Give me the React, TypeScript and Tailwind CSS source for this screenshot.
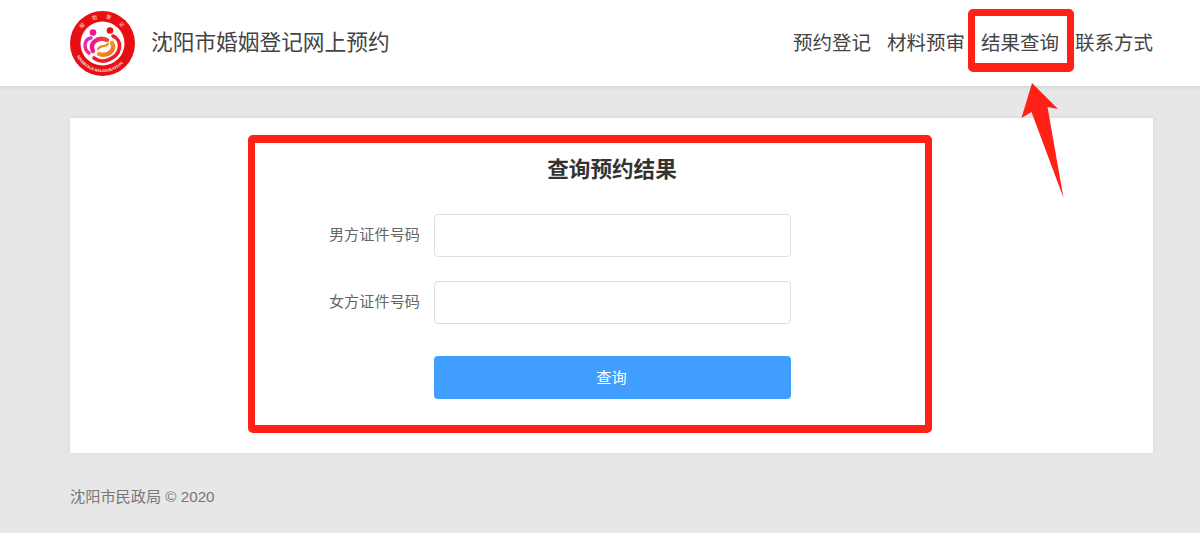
export default function App() {
  const font = "font-['Liberation_Sans','Noto_Sans_CJK_SC',sans-serif]";
  return (
    <div className={`${font} relative min-h-[533px] bg-[#e7e7e7] text-[#333]`}>
      <header className="flex h-[86px] items-center justify-between bg-white pl-[70px] pr-[47px] shadow-[0_1px_4px_rgba(0,0,0,0.1)]">
        <div className="flex items-center gap-[16px]">
          <svg width="65" height="65" viewBox="0 0 65 65" className="shrink-0">
            <defs>
              <path id="ringTop" d="M7.5 32.5 A25 25 0 0 1 57.5 32.5" />
              <path id="ringBottom" d="M4 32.5 A28.5 28.5 0 0 0 61 32.5" />
              <linearGradient id="leftArc" x1="0" y1="0" x2="0" y2="1">
                <stop offset="0" stopColor="#d92ad0" />
                <stop offset="1" stopColor="#f5287a" />
              </linearGradient>
              <linearGradient id="swirlA" x1="0" y1="0" x2="1" y2="0">
                <stop offset="0" stopColor="#e8188f" />
                <stop offset="1" stopColor="#f24a2a" />
              </linearGradient>
              <linearGradient id="swirlB" x1="0" y1="0" x2="1" y2="1">
                <stop offset="0" stopColor="#fbb024" />
                <stop offset="1" stopColor="#f26a1c" />
              </linearGradient>
            </defs>
            <circle cx="32.5" cy="32.5" r="32.5" fill="#e60f14" />
            <circle cx="32.5" cy="32.5" r="22" fill="#fff" />
            <text fontSize="5" fill="#ffe2cc" letterSpacing="8.5" fontFamily="'Noto Sans CJK SC'">
              <textPath href="#ringTop" startOffset="15">婚姻登记</textPath>
            </text>
            <text fontSize="4" fill="#fff" fontFamily="'Liberation Serif'" fontWeight="700">
              <textPath href="#ringBottom" startOffset="13">MARRIAGE REGISTRATION</textPath>
            </text>
            <circle cx="23" cy="21.5" r="3.3" fill="#f0188c" />
            <circle cx="40" cy="19.5" r="3.3" fill="#e60f14" />
            <path d="M21 27 C14 28 13 38 19 42" fill="none" stroke="url(#leftArc)" strokeWidth="3.4" strokeLinecap="round" />
            <path d="M43 25 C53 29 52 44 38 49 C33 51 28 50 24 47" fill="none" stroke="#ee1c25" strokeWidth="3.6" strokeLinecap="round" />
            <path d="M23 40 C19 32 28 25 37 29" fill="none" stroke="url(#swirlA)" strokeWidth="4.4" strokeLinecap="round" />
            <path d="M42 32 C46 39 38 46 29 43" fill="none" stroke="url(#swirlB)" strokeWidth="4.4" strokeLinecap="round" />
            <path d="M28 38 C31 33 35 37 38 33" fill="none" stroke="#f58a1f" strokeWidth="2.2" strokeLinecap="round" />
          </svg>
          <div className="text-[21.7px] leading-none text-[#444]">沈阳市婚姻登记网上预约</div>
        </div>
        <nav className="flex gap-[16px] pt-[2px] text-[19.5px] leading-none text-[#444]">
          <a>预约登记</a>
          <a>材料预审</a>
          <a>结果查询</a>
          <a>联系方式</a>
        </nav>
      </header>

      <main className="px-[47px] pl-[70px] pt-[32px]">
        <section className="h-[335px] bg-white pt-[38px] shadow-[0_0_5px_rgba(0,0,0,0.08)]">
          <h1 className="pl-[1px] text-center text-[21.6px] font-bold leading-[28px]">查询预约结果</h1>
          <div className="mt-[30px] flex flex-col gap-[24px]">
            <div className="flex items-center">
              <label className="w-[364px] pr-[14px] text-right text-[15.2px] text-[#666]">男方证件号码</label>
              <input className="h-[43px] w-[357px] rounded-[4px] border border-[#dcdfe6] bg-white" />
            </div>
            <div className="flex items-center">
              <label className="w-[364px] pr-[14px] text-right text-[15.2px] text-[#666]">女方证件号码</label>
              <input className="h-[43px] w-[357px] rounded-[4px] border border-[#dcdfe6] bg-white" />
            </div>
          </div>
          <div className="mt-[32px] pl-[364px]">
            <button className="h-[43px] w-[357px] rounded-[4px] bg-[#409eff] pr-[2px] pt-[1px] text-[15.2px] text-white">查询</button>
          </div>
        </section>
        <footer className="pt-[34px] text-[15.2px] leading-[20px] text-[#777]">沈阳市民政局 © 2020</footer>
      </main>

      <div className="absolute left-[968px] top-[9px] h-[63px] w-[106px] rounded-[5px] border-[7px] border-b-[9px] border-[#ff2116]" />
      <div className="absolute left-[248px] top-[135px] h-[298px] w-[684px] rounded-[5px] border-[8px] border-x-[7px] border-[#ff2116]" />
      <svg className="absolute left-0 top-0" width="1200" height="533" fill="none">
        <polygon points="1032,83 1058,109 1047.5,107 1063.5,198 1031.5,112 1021.5,118" fill="#ff2116" />
      </svg>
    </div>
  );
}
